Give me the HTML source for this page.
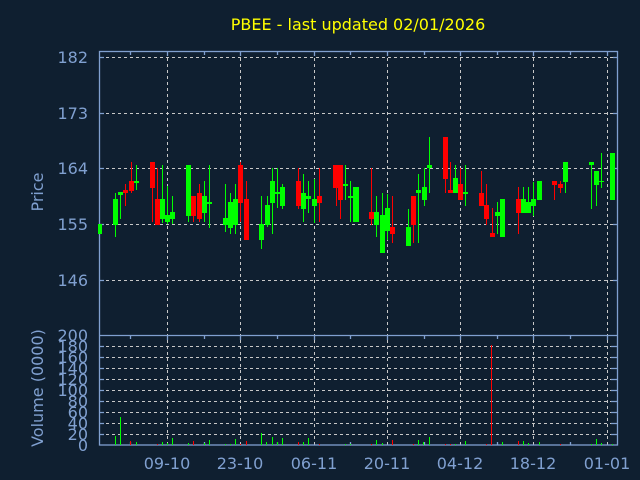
<!DOCTYPE html>
<html><head><style>
html,body{margin:0;padding:0;background:#0f1f30;}
svg{display:block;}
text{font-family:"DejaVu Sans","Liberation Sans",sans-serif;}
</style></head><body>
<svg width="640" height="480" viewBox="0 0 640 480" xmlns="http://www.w3.org/2000/svg">
<rect width="640" height="480" fill="#0f1f30"/>
<text x="358" y="30" fill="#ffff00" font-size="16" text-anchor="middle">PBEE - last updated 02/01/2026</text>
<g stroke="#c8c8c8" stroke-width="1" stroke-dasharray="3,3" fill="none">
<line x1="100" y1="57.5" x2="617" y2="57.5"/>
<line x1="100" y1="113.5" x2="617" y2="113.5"/>
<line x1="100" y1="168.5" x2="617" y2="168.5"/>
<line x1="100" y1="224.5" x2="617" y2="224.5"/>
<line x1="100" y1="280.5" x2="617" y2="280.5"/>
<line x1="100" y1="346.5" x2="617" y2="346.5"/>
<line x1="100" y1="357.5" x2="617" y2="357.5"/>
<line x1="100" y1="368.5" x2="617" y2="368.5"/>
<line x1="100" y1="379.5" x2="617" y2="379.5"/>
<line x1="100" y1="390.5" x2="617" y2="390.5"/>
<line x1="100" y1="401.5" x2="617" y2="401.5"/>
<line x1="100" y1="412.5" x2="617" y2="412.5"/>
<line x1="100" y1="423.5" x2="617" y2="423.5"/>
<line x1="100" y1="434.5" x2="617" y2="434.5"/>
<line x1="167.5" y1="52" x2="167.5" y2="445"/>
<line x1="240.5" y1="52" x2="240.5" y2="445"/>
<line x1="314.5" y1="52" x2="314.5" y2="445"/>
<line x1="387.5" y1="52" x2="387.5" y2="445"/>
<line x1="460.5" y1="52" x2="460.5" y2="445"/>
<line x1="533.5" y1="52" x2="533.5" y2="445"/>
<line x1="607.5" y1="52" x2="607.5" y2="445"/>
</g>
<g stroke="#80a0d0" stroke-width="1.3" fill="none">
<rect x="99.5" y="51.5" width="518" height="393.5"/>
<line x1="99.5" y1="335.5" x2="617.5" y2="335.5"/>
<path d="M130.5 52v3M167.5 52v4M204.5 52v3M240.5 52v4M277.5 52v3M314.5 52v4M350.5 52v3M387.5 52v4M424.5 52v3M460.5 52v4M497.5 52v3M533.5 52v4M570.5 52v3M607.5 52v4"/>
<path d="M130.5 336v3M167.5 336v4M204.5 336v3M240.5 336v4M277.5 336v3M314.5 336v4M350.5 336v3M387.5 336v4M424.5 336v3M460.5 336v4M497.5 336v3M533.5 336v4M570.5 336v3M607.5 336v4"/>
<path d="M130.5 445v-3M204.5 445v-3M277.5 445v-3M350.5 445v-3M424.5 445v-3M497.5 445v-3M570.5 445v-3"/>
<path d="M100 57.5h4M100 113.5h4M100 168.5h4M100 224.5h4M100 280.5h4M617 57.5h-4M617 113.5h-4M617 168.5h-4M617 224.5h-4M617 280.5h-4"/>
<path d="M100 346.5h4M100 357.5h4M100 368.5h4M100 379.5h4M100 390.5h4M100 401.5h4M100 412.5h4M100 423.5h4M100 434.5h4M617 346.5h-6M617 357.5h-6M617 368.5h-6M617 379.5h-6M617 390.5h-6M617 401.5h-6M617 412.5h-6M617 423.5h-6M617 434.5h-6"/>
</g>
<g fill="#80a0d0" font-size="16" text-anchor="end">
<text x="88" y="63">182</text>
<text x="88" y="119">173</text>
<text x="88" y="174">164</text>
<text x="88" y="230">155</text>
<text x="88" y="286">146</text>
<text x="88" y="341">200</text>
<text x="88" y="352">180</text>
<text x="88" y="363">160</text>
<text x="88" y="374">140</text>
<text x="88" y="385">120</text>
<text x="88" y="396">100</text>
<text x="88" y="407">80</text>
<text x="88" y="418">60</text>
<text x="88" y="429">40</text>
<text x="88" y="440">20</text>
<text x="88" y="451">0</text>
</g>
<g fill="#80a0d0" font-size="16" text-anchor="middle">
<text x="167" y="469">09-10</text>
<text x="240" y="469">23-10</text>
<text x="314" y="469">06-11</text>
<text x="387" y="469">20-11</text>
<text x="460" y="469">04-12</text>
<text x="533" y="469">18-12</text>
<text x="607" y="469">01-01</text>
<text transform="translate(43,192) rotate(-90)">Price</text>
<text transform="translate(43,388) rotate(-90)">Volume (0000)</text>
</g>
<g stroke-width="1">
<g stroke="#00ff00">
<path d="M115.5 193V237M120.5 193V219M136.5 165V190M162.5 165V223M167.5 186V224M172.5 196V224M188.5 165V222M204.5 181V222M209.5 165V228M225.5 184V232M230.5 193V234M235.5 184V234M261.5 196V249M267.5 196V227M272.5 168V234M277.5 168V208M282.5 184V209M303.5 174V222M308.5 181V213M314.5 179V223M345.5 165V200M350.5 181V222M376.5 196V237M382.5 193V253M387.5 194V240M408.5 209V246M418.5 174V243M424.5 168V206M429.5 137V193M455.5 165V193M465.5 165V206M497.5 202V234M523.5 187V213M528.5 187V213M533.5 182V216M565.5 162V193M591.5 162V209M596.5 171V206M601.5 153V188"/>
</g>
<g stroke="#ff0000">
<path d="M125.5 184V206M131.5 162V193M152.5 162V222M157.5 168V225M193.5 196V222M199.5 184V222M240.5 162V222M246.5 181V240M298.5 168V209M319.5 168V222M336.5 165V206M340.5 165V219M371.5 168V225M392.5 196V243M413.5 196V243M445.5 137V193M450.5 162V193M460.5 168V200M481.5 171V206M486.5 184V225M492.5 208V237M518.5 187V234M554.5 181V200M560.5 181V193"/>
</g>
<g fill="#00ff00">
<rect x="98" y="224" width="4" height="10"/>
<rect x="113" y="199" width="5" height="26"/>
<rect x="118" y="192" width="5" height="3"/>
<rect x="134" y="181" width="5" height="2"/>
<rect x="160" y="199" width="5" height="20"/>
<rect x="165" y="215" width="5" height="7"/>
<rect x="170" y="212" width="5" height="7"/>
<rect x="186" y="165" width="5" height="51"/>
<rect x="202" y="196" width="5" height="17"/>
<rect x="207" y="202" width="5" height="2"/>
<rect x="223" y="218" width="5" height="7"/>
<rect x="228" y="202" width="5" height="26"/>
<rect x="233" y="199" width="5" height="26"/>
<rect x="259" y="224" width="5" height="16"/>
<rect x="265" y="205" width="5" height="20"/>
<rect x="270" y="181" width="5" height="22"/>
<rect x="275" y="192" width="5" height="2"/>
<rect x="280" y="187" width="5" height="19"/>
<rect x="301" y="193" width="5" height="16"/>
<rect x="306" y="196" width="5" height="3"/>
<rect x="312" y="199" width="5" height="7"/>
<rect x="343" y="184" width="5" height="2"/>
<rect x="348" y="196" width="5" height="2"/>
<rect x="353" y="187" width="6" height="35"/>
<rect x="374" y="212" width="5" height="13"/>
<rect x="380" y="215" width="5" height="38"/>
<rect x="385" y="208" width="5" height="23"/>
<rect x="406" y="227" width="5" height="19"/>
<rect x="416" y="190" width="5" height="3"/>
<rect x="422" y="187" width="5" height="13"/>
<rect x="427" y="165" width="5" height="3"/>
<rect x="453" y="178" width="5" height="15"/>
<rect x="463" y="192" width="5" height="2"/>
<rect x="495" y="212" width="5" height="4"/>
<rect x="500" y="199" width="5" height="38"/>
<rect x="521" y="199" width="5" height="14"/>
<rect x="526" y="202" width="5" height="11"/>
<rect x="531" y="199" width="5" height="7"/>
<rect x="537" y="181" width="5" height="19"/>
<rect x="563" y="162" width="5" height="20"/>
<rect x="589" y="162" width="5" height="3"/>
<rect x="594" y="171" width="5" height="14"/>
<rect x="599" y="181" width="5" height="1"/>
<rect x="610" y="153" width="5" height="47"/>
</g>
<g fill="#ff0000">
<rect x="123" y="190" width="5" height="3"/>
<rect x="129" y="181" width="5" height="10"/>
<rect x="150" y="162" width="5" height="26"/>
<rect x="155" y="199" width="5" height="26"/>
<rect x="191" y="196" width="5" height="20"/>
<rect x="197" y="193" width="5" height="26"/>
<rect x="238" y="165" width="5" height="38"/>
<rect x="244" y="199" width="5" height="41"/>
<rect x="296" y="181" width="5" height="25"/>
<rect x="317" y="196" width="5" height="7"/>
<rect x="333" y="165" width="5" height="23"/>
<rect x="338" y="165" width="5" height="35"/>
<rect x="369" y="212" width="5" height="7"/>
<rect x="390" y="227" width="5" height="7"/>
<rect x="411" y="196" width="5" height="29"/>
<rect x="443" y="137" width="5" height="42"/>
<rect x="448" y="190" width="5" height="3"/>
<rect x="458" y="184" width="5" height="16"/>
<rect x="479" y="193" width="5" height="13"/>
<rect x="484" y="205" width="5" height="14"/>
<rect x="490" y="233" width="5" height="4"/>
<rect x="516" y="199" width="5" height="14"/>
<rect x="552" y="181" width="5" height="4"/>
<rect x="558" y="184" width="5" height="4"/>
</g>
<g stroke="#00ff00">
<path d="M115.5 445v-9M120.5 445v-28M136.5 445v-3M162.5 445v-3M167.5 445v-2M172.5 445v-7M188.5 445v-2M204.5 445v-2M209.5 445v-5M225.5 445v-1M230.5 445v-1M235.5 445v-6M261.5 445v-12M266.5 445v-3M272.5 445v-8M277.5 445v-3M282.5 445v-7M303.5 445v-3M308.5 445v-7M345.5 445v-1M350.5 445v-1M376.5 445v-5M382.5 445v-2M418.5 445v-5M423.5 445v-3M429.5 445v-8M455.5 445v-1M465.5 445v-4M502.5 445v-3M523.5 445v-4M528.5 445v-2M539.5 445v-3M591.5 445v-1M596.5 445v-6M601.5 445v-2M612.5 445v-1"/>
</g>
<g stroke="#ff0000">
<path d="M130.5 445v-4M157.5 445v-1M193.5 445v-4M240.5 445v-1M246.5 445v-4M298.5 445v-3M319.5 445v-1M371.5 445v-1M392.5 445v-5M413.5 445v-1M445.5 445v-1M450.5 445v-1M486.5 445v-1M491.5 445v-100M518.5 445v-4M560.5 445v-1"/>
</g>
</g>
</svg>
</body></html>
